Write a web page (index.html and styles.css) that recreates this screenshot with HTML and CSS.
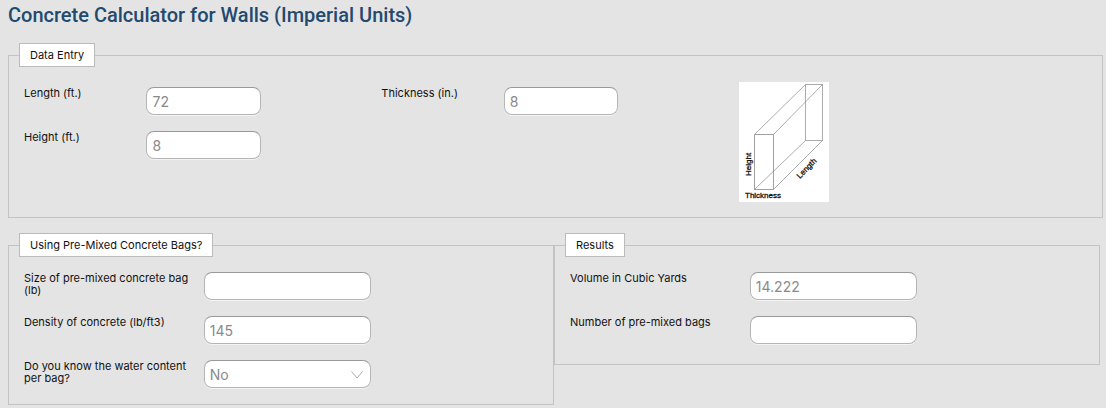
FILE: index.html
```html
<!DOCTYPE html>
<html lang="en">

<head>
    <meta charset="UTF-8">
    <meta name="viewport" content="width=device-width, initial-scale=1.0">
    <title>Concrete Calculator for Walls (Imperial Units)</title>
    <link rel="stylesheet" href="styles.css">
</head>

<body>

    <h1>Concrete Calculator for Walls (Imperial Units)</h1>

    <form class="calculator">

        <fieldset class="data-entry">
            <legend>Data Entry</legend>
            <div class="columns">
                <div class="column">
                    <div class="field">
                        <label for="length">Length (ft.)</label>
                        <input type="text" id="length" value="72">
                    </div>
                    <div class="field">
                        <label for="height">Height (ft.)</label>
                        <input type="text" id="height" value="8">
                    </div>
                </div>
                <div class="column">
                    <div class="field">
                        <label for="thickness">Thickness (in.)</label>
                        <input type="text" id="thickness" value="8">
                    </div>
                </div>
                <!-- Wall diagram -->
                <svg class="diagram" width="90" height="120" viewBox="0 0 90 120" role="img" aria-label="Wall dimensions">
                    <g fill="none" stroke="#888" stroke-width=".7">
                        <path d="M66.5 2.5H83.5V58.5H66.5Z" />
                        <path d="M15.5 52.5H34.5V107.5H15.5Z" stroke="#777" />
                        <path d="M15.5 52.5L66.5 2.5M34.5 52.5L83.5 2.5M34.5 107.5L83.5 58.5M15.5 107.5L66.5 58.5" />
                    </g>
                    <text x="6" y="116">Thickness</text>
                    <text transform="translate(12 94) rotate(-90)">Height</text>
                    <text transform="translate(61 97) rotate(-46)">Length</text>
                </svg>
            </div>
        </fieldset>

        <div class="panels">

            <fieldset class="bags">
                <legend>Using Pre-Mixed Concrete Bags?</legend>
                <div class="field">
                    <label for="bag-size">Size of pre-mixed concrete bag (lb)</label>
                    <input type="text" id="bag-size">
                </div>
                <div class="field">
                    <label for="density">Density of concrete (lb/ft3)</label>
                    <input type="text" id="density" value="145">
                </div>
                <div class="field">
                    <label for="water">Do you know the water content per bag?</label>
                    <div class="select">
                        <select id="water">
                            <option>No</option>
                            <option>Yes</option>
                        </select>
                        <svg class="arrow" width="12" height="8" viewBox="0 0 12 8">
                            <path d="M.5 .5L6 7L11.5 .5" fill="none" stroke="#aaa" />
                        </svg>
                    </div>
                </div>
            </fieldset>

            <fieldset class="results">
                <legend>Results</legend>
                <div class="field">
                    <label for="volume">Volume in Cubic Yards</label>
                    <input type="text" id="volume" value="14.222" readonly>
                </div>
                <div class="field">
                    <label for="bag-count">Number of pre-mixed bags</label>
                    <input type="text" id="bag-count" readonly>
                </div>
            </fieldset>

        </div>

    </form>

</body>

</html>
```

FILE: styles.css
```css
* {
    box-sizing: border-box;
}

body {
    margin: 0;
    padding: 3px 3px 0 8px;
    background-color: #e4e4e4;
    color: #111;
    font-family: Inter, "Liberation Sans", sans-serif;
    font-size: 11px;
    line-height: 12px;
}

h1 {
    margin: 0 0 16px;
    color: #23496f;
    font-family: Roboto, Inter, sans-serif;
    font-size: 20px;
    font-weight: 500;
    line-height: 24px;
}

fieldset {
    min-width: 0;
    margin: 0;
    padding: 15px 6px 0 10px;
    border: 1px solid #c3c3c3;
}

legend {
    padding: 5px 10px;
    border: 1px solid #bbb;
    background-color: white;
}

.data-entry {
    padding-bottom: 15px;
    margin-bottom: 15px;
}

.columns {
    display: grid;
    grid-template-columns: repeat(3, 1fr);
    padding-left: 5px;
}

.column {
    padding-top: 5px;
}

.field {
    display: flex;
    align-items: flex-start;
    gap: 1px;
    margin-bottom: 16px;
}

.column label {
    width: 34%;
}

.column input {
    width: 32%;
}

input, select {
    display: block;
    width: 100%;
    height: 28px;
    padding: 0 5px;
    border: 1px solid #b5b5b5;
    border-top-color: #999;
    border-radius: 8px;
    background-color: white;
    box-shadow: 0 1px 0 #f4f4f4;
    color: #8a8a8a;
    font-family: inherit;
    font-size: 14px;
}

select {
    appearance: none;
}

.diagram {
    display: block;
    background-color: white;
}

.diagram text {
    font-family: "Liberation Sans", Arial, sans-serif;
    font-size: 8px;
    fill: #111;
    stroke: #111;
    stroke-width: .3px;
}

.panels {
    display: grid;
    grid-template-columns: 1fr 1fr;
    align-items: start;
    padding-right: 3px;
}

.panels .field {
    gap: 2px;
    padding-left: 5px;
}

.panels label {
    width: 34%;
    padding-right: 12px;
}

.panels input, .select {
    width: 32%;
}

.results {
    padding-bottom: 4px;
}

.select {
    position: relative;
}

.arrow {
    position: absolute;
    top: 11px;
    right: 8px;
    pointer-events: none;
}
```
